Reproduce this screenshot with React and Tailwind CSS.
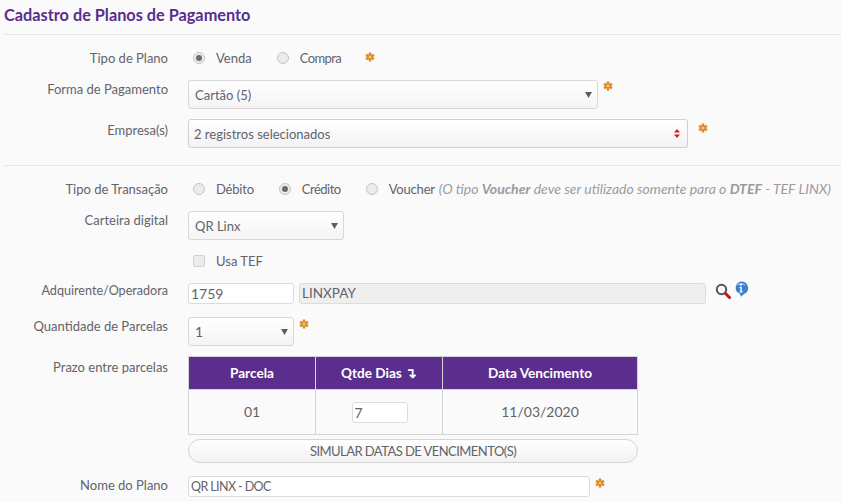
import React from "react";

const Asterisk = ({ className = "" }) => (
  <svg viewBox="0 0 10 10" className={`w-[10px] h-[10px] ${className}`}>
    <g stroke="#dc8a24" strokeWidth="2.6">
      <path d="M5 .5v9" />
      <path d="M1 2.8l8 4.4" />
      <path d="M1 7.2l8-4.4" />
    </g>
    <circle cx="5" cy="5" r="1.3" fill="#f7cf8c" />
  </svg>
);

const Radio = ({ checked }) => (
  <span className="w-[12px] h-[12px] rounded-full border border-[#c4c4c4] bg-[#ececec] flex items-center justify-center shrink-0">
    {checked && <span className="w-[6px] h-[6px] rounded-full bg-[#6a6a6a]" />}
  </span>
);

const Label = ({ children, className = "" }) => (
  <div className={`w-[168px] shrink-0 text-right ${className}`}>{children}</div>
);

const Caret = () => (
  <svg viewBox="0 0 8 7" className="w-[7px] h-[6px]">
    <path d="M0 0h8L4 7z" fill="#5c5c5c" />
  </svg>
);

const Select = ({ width, children, caret }) => (
  <div
    className={`${width} h-[29px] rounded-[3px] border border-[#d8d8d8] bg-gradient-to-b from-white to-[#f4f4f4] flex items-center justify-between pl-[6px] pr-[5px]`}
  >
    <span>{children}</span>
    {caret || <Caret />}
  </div>
);

export default function App() {
  return (
    <div
      className="w-[841px] h-[502px] overflow-hidden bg-[#fafafa] text-[13px] text-[#63636b] leading-[16px]"
      style={{ fontFamily: '"Lato", "Liberation Sans", sans-serif' }}
    >
      <h1 className="h-[34px] ml-[4px] pt-[5px] text-[16.3px] leading-[20px] font-bold text-[#5b2d8c]">
        Cadastro de Planos de Pagamento
      </h1>
      <div className="h-px ml-[3px] bg-[#e8e8e8]" />

      <div className="flex items-center h-[16px] mt-[15px]">
        <Label>Tipo de Plano</Label>
        <div className="flex items-center ml-[25px]">
          <Radio checked />
          <span className="ml-[11px]">Venda</span>
          <span className="ml-[25px]"><Radio /></span>
          <span className="ml-[11px] tracking-[-0.6px]">Compra</span>
          <Asterisk className="ml-[24px] -mt-[3px]" />
        </div>
      </div>

      <div className="flex mt-[14px]">
        <Label className="pt-[1px]">Forma de Pagamento</Label>
        <div className="ml-[20px] flex items-start">
          <Select width="w-[410px]">Cartão (5)</Select>
          <Asterisk className="ml-[5px] mt-[1px]" />
        </div>
      </div>

      <div className="flex mt-[10px]">
        <Label className="pt-[3px]">Empresa(s)</Label>
        <div className="ml-[20px] flex items-start">
          <div className="w-[500px] h-[29px] rounded-[3px] border border-[#cfcfcf] bg-gradient-to-b from-white to-[#f2f2f2] flex items-center justify-between pl-[5px] pr-[7px]">
            <span>2 registros selecionados</span>
            <svg viewBox="0 0 6 9" className="w-[6px] h-[9px]">
              <path d="M3 0l3 3.4H0zM3 9L0 5.6h6z" fill="#d01c1c" />
            </svg>
          </div>
          <Asterisk className="ml-[10px] mt-[4px]" />
        </div>
      </div>

      <div className="h-px ml-[3px] mt-[17px] bg-[#e8e8e8]" />

      <div className="flex items-center h-[16px] mt-[15px] whitespace-nowrap">
        <Label>Tipo de Transação</Label>
        <div className="flex items-center ml-[25px]">
          <Radio />
          <span className="ml-[11px] tracking-[-0.2px]">Débito</span>
          <span className="ml-[25px]"><Radio checked /></span>
          <span className="ml-[11px] tracking-[-0.5px]">Crédito</span>
          <span className="ml-[25px]"><Radio /></span>
          <span className="ml-[11px] tracking-[-0.2px]">Voucher</span>
          <span className="ml-[4px] italic text-[14px] text-[#9a9aa0]">
            (O tipo <b>Voucher</b> deve ser utilizado somente para o <b>DTEF</b> - TEF LINX)
          </span>
        </div>
      </div>

      <div className="flex mt-[14px]">
        <Label className="pt-[1px]">Carteira digital</Label>
        <div className="ml-[20px]">
          <Select width="w-[156px]">QR Linx</Select>
        </div>
      </div>

      <div className="flex items-center h-[16px] mt-[13px]">
        <Label />
        <div className="flex items-center ml-[25px]">
          <span className="w-[12px] h-[12px] rounded-[2px] border border-[#d0d0d0] bg-[#ececec]" />
          <span className="ml-[11px]">Usa TEF</span>
        </div>
      </div>

      <div className="flex mt-[14px]">
        <Label className="text-[12.6px]">Adquirente/Operadora</Label>
        <div className="ml-[20px] flex items-start">
          <div className="w-[106px] h-[21px] rounded-[3px] border border-[#dcdcdc] bg-white pl-[2px] leading-[19px] text-[14px]">
            1759
          </div>
          <div className="w-[407px] h-[21px] ml-[5px] rounded-[3px] border border-[#dcdcdc] bg-[#efefef] pl-[2px] leading-[19px] text-[13.5px]">
            LINXPAY
          </div>
          <svg viewBox="0 0 16 16" className="w-[16px] h-[16px] ml-[9px]">
            <circle cx="6.5" cy="6.5" r="4.7" fill="none" stroke="#555" strokeWidth="2" />
            <path d="M10.5 10.5l4 4" stroke="#c81414" strokeWidth="3" strokeLinecap="round" />
          </svg>
          <svg viewBox="0 0 16 16" className="w-[16px] h-[16px] ml-[2px] -mt-[2px]">
            <path d="M8 .5a7 6.5 0 0 1 3 12.4L8 15.8l-1-3A7 6.5 0 0 1 8 .5z" fill="#3d7fd0" />
            <path d="M3 4.5a5.5 4 0 0 1 10 0a7 3 0 0 0-10 0z" fill="#b9d6f4" />
            <circle cx="8" cy="3.6" r="1.1" fill="#fff" />
            <path d="M6.4 5.8h2.4v4.6h1v1H6.4v-1h.9v-3.6h-.9z" fill="#fff" />
          </svg>
        </div>
      </div>

      <div className="flex mt-[13px]">
        <Label className="pt-[1px]">Quantidade de Parcelas</Label>
        <div className="ml-[20px] flex items-start">
          <Select width="w-[106px]"><span className="text-[14px]">1</span></Select>
          <Asterisk className="ml-[5px] mt-[2px]" />
        </div>
      </div>

      <div className="flex mt-[10px]">
        <Label className="pt-[3px]">Prazo entre parcelas</Label>
        <div className="ml-[20px] w-[450px]">
          <table className="w-full table-fixed border-collapse text-center">
            <thead>
              <tr className="h-[33px] bg-[#5b2d8c] text-white font-bold text-[13.6px]">
                <th className="w-[127px] border border-[#d4d4d4]">Parcela</th>
                <th className="w-[127px] border border-[#d4d4d4]">Qtde Dias ↴</th>
                <th className="border border-[#d4d4d4]">Data Vencimento</th>
              </tr>
            </thead>
            <tbody>
              <tr className="h-[45px] text-[14px]">
                <td className="border border-[#d4d4d4]">01</td>
                <td className="border border-[#d4d4d4] pl-[1px]">
                  <div className="w-[56px] h-[21px] mx-auto rounded-[3px] border border-[#dcdcdc] bg-white pl-[2px] text-left leading-[19px]">
                    7
                  </div>
                </td>
                <td className="border border-[#d4d4d4]">11/03/2020</td>
              </tr>
            </tbody>
          </table>
          <button className="w-full h-[24px] mt-[4px] rounded-full border border-[#d4d4d4] bg-gradient-to-b from-white to-[#f2f2f2] text-[#63636b] text-[13px] tracking-[-0.55px] text-center">
            SIMULAR DATAS DE VENCIMENTO(S)
          </button>
        </div>
      </div>

      <div className="flex mt-[13px]">
        <Label className="pt-[1px]">Nome do Plano</Label>
        <div className="ml-[20px] flex items-start">
          <div className="w-[402px] h-[21px] rounded-[3px] border border-[#dcdcdc] bg-white pl-[2px] leading-[19px] text-[12.5px] tracking-[-0.6px]">
            QR LINX - DOC
          </div>
          <Asterisk className="ml-[5px] mt-[2px]" />
        </div>
      </div>
    </div>
  );
}
